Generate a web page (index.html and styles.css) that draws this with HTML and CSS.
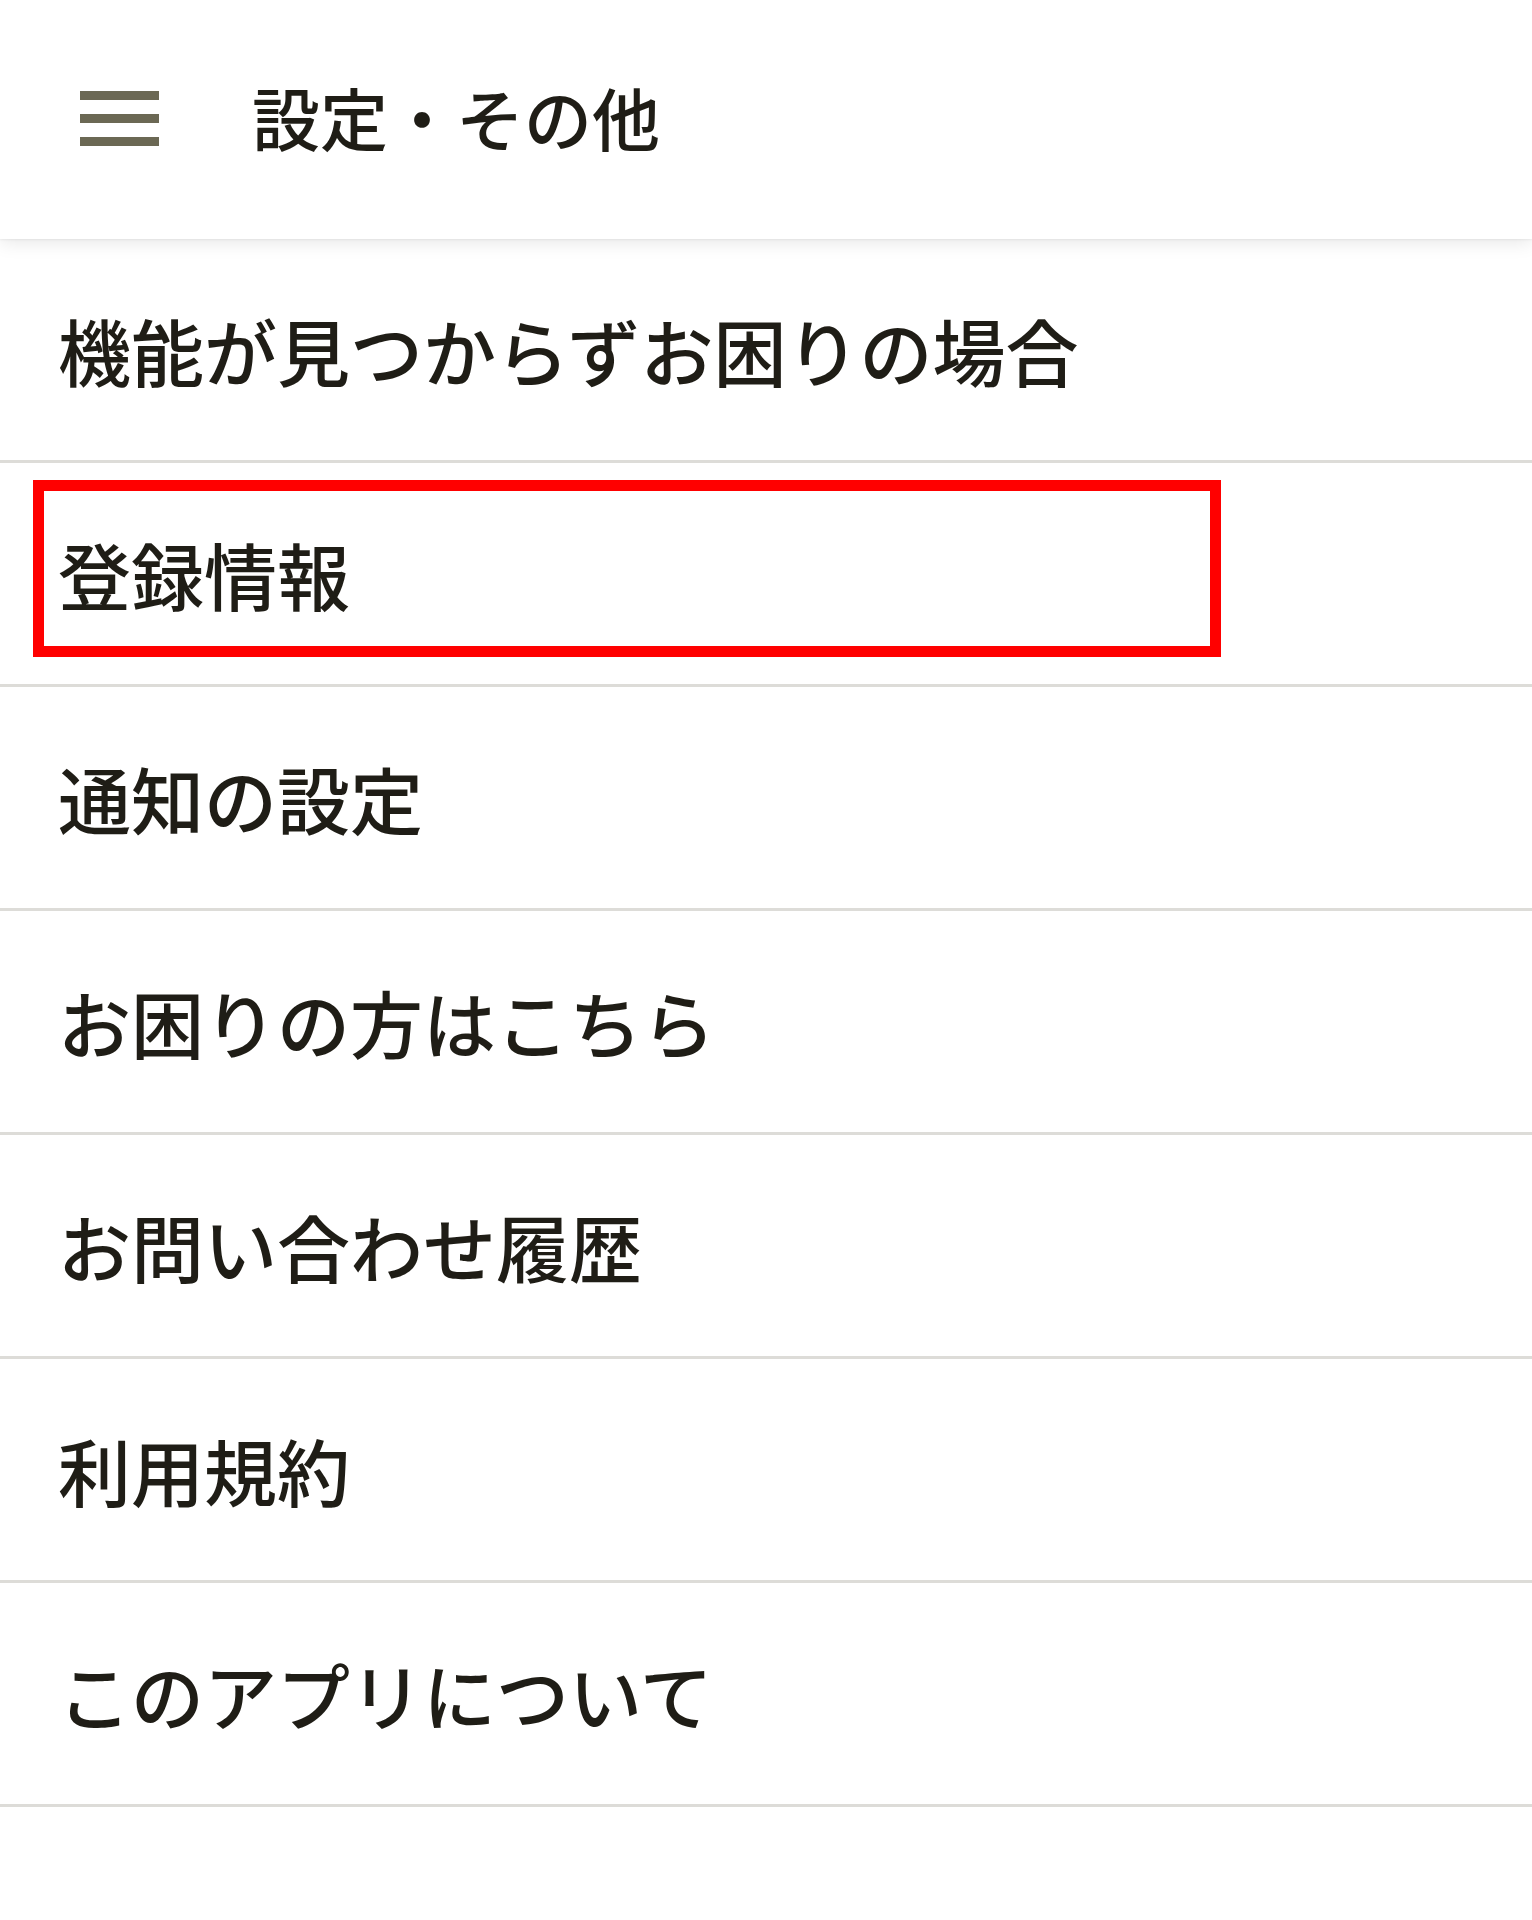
FILE: index.html
```html
<!DOCTYPE html>
<html lang="ja">
<head>
<meta charset="utf-8">
<title>設定・その他</title>
<link rel="stylesheet" href="styles.css">
</head>
<body>
<header class="app-bar">
  <div class="menu-icon" aria-label="メニュー">
    <span class="bar"></span>
    <span class="bar"></span>
    <span class="bar"></span>
  </div>
  <h1 class="title">設定・その他</h1>
</header>
<ul class="menu-list">
  <li class="menu-item">機能が見つからずお困りの場合</li>
  <li class="menu-item highlighted">登録情報<span class="highlight-box"></span></li>
  <li class="menu-item">通知の設定</li>
  <li class="menu-item">お困りの方はこちら</li>
  <li class="menu-item">お問い合わせ履歴</li>
  <li class="menu-item">利用規約</li>
  <li class="menu-item">このアプリについて</li>
</ul>
</body>
</html>
```
FILE: styles.css
```css
html, body {
  margin: 0;
  padding: 0;
  background: #ffffff;
}

body {
  font-family: "Noto Sans CJK JP", "Noto Sans", sans-serif;
  color: #1f1d16;
}

.app-bar {
  height: 239px;
  display: flex;
  align-items: center;
  background: #ffffff;
  box-shadow: 0 3px 18px rgba(0, 0, 0, 0.10), 0 1px 2px rgba(0, 0, 0, 0.06);
  position: relative;
  z-index: 1;
}

.menu-icon {
  margin-left: 80px;
  width: 79px;
  display: flex;
  flex-direction: column;
  gap: 14px;
  margin-top: -2px;
}

.bar {
  display: block;
  height: 9px;
  background: #6b6854;
}

.title {
  margin: -5px 0 0 93px;
  font-size: 68px;
  font-weight: 500;
  line-height: 1;
  letter-spacing: 0;
  color: #1f1d16;
}

.menu-list {
  list-style: none;
  margin: 0;
  padding: 0;
}

.menu-item {
  position: relative;
  height: 221px;
  display: flex;
  align-items: center;
  padding-left: 58px;
  font-size: 73px;
  font-weight: 500;
  line-height: 1;
  border-bottom: 3px solid #dddcd8;
}

.highlight-box {
  position: absolute;
  left: 33px;
  top: 17px;
  width: 1166px;
  height: 155px;
  border: 11px solid #ff0000;
}
```
